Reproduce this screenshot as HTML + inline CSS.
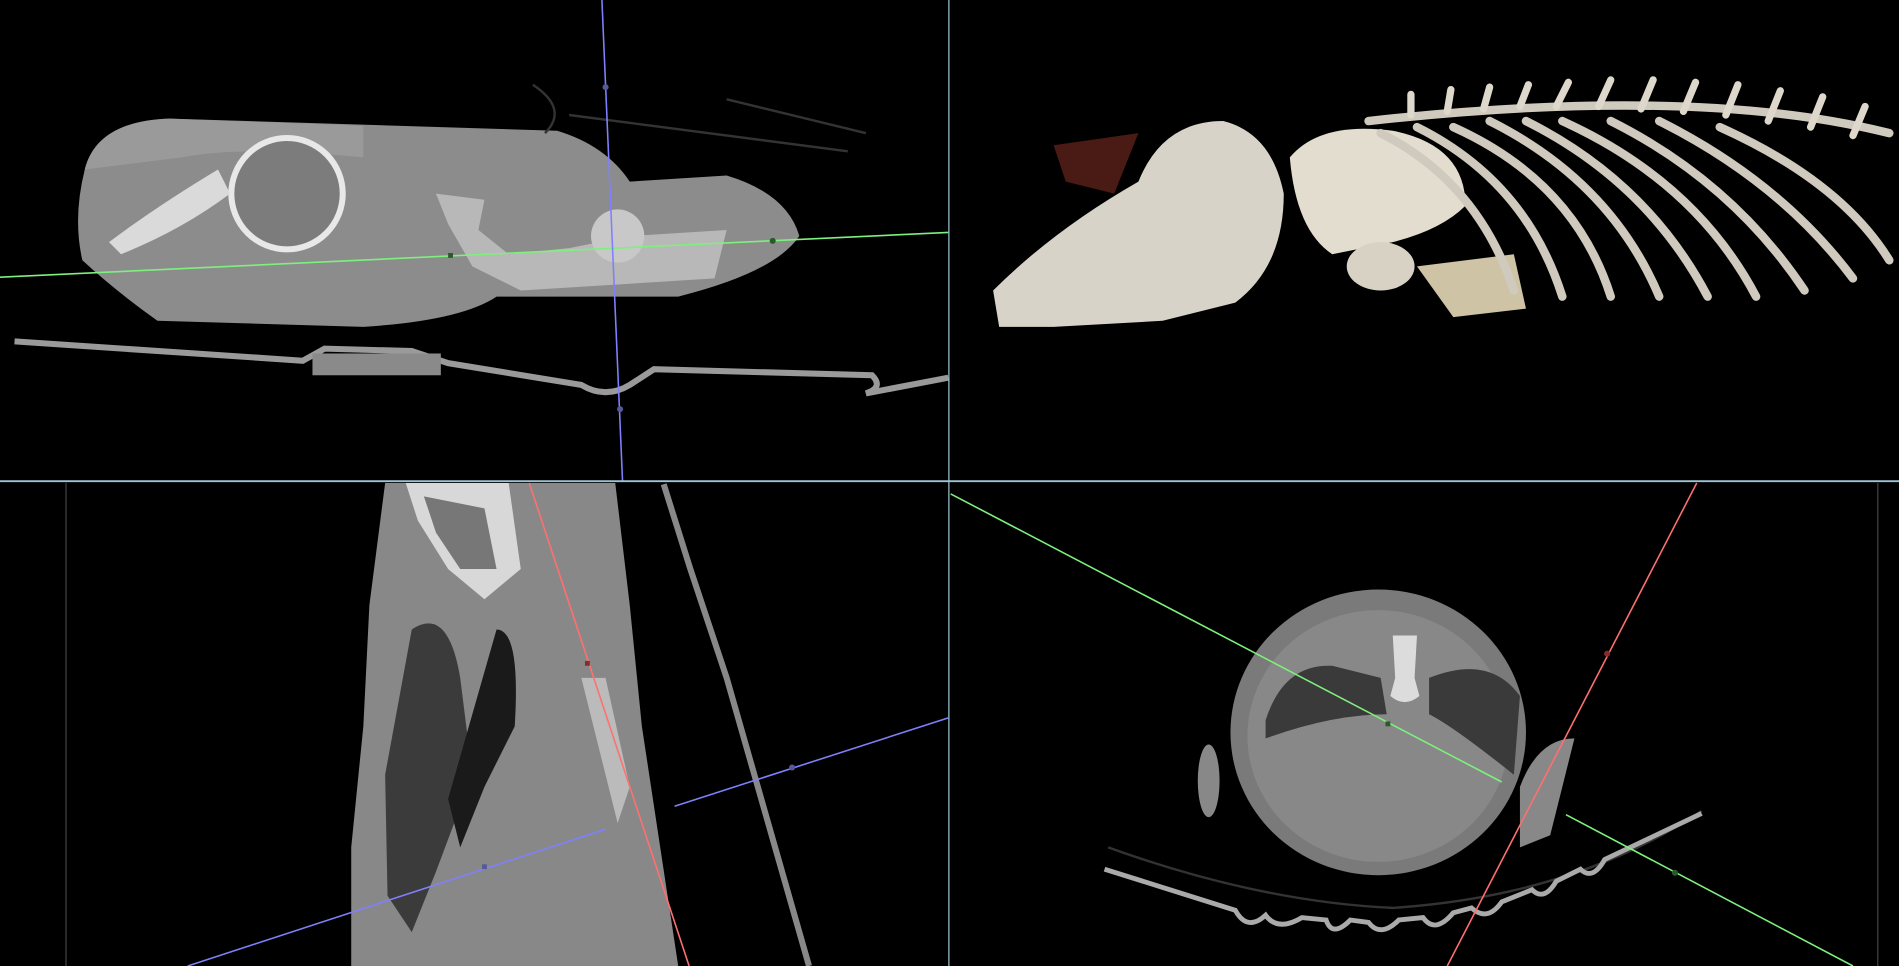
<!DOCTYPE html>
<html><head><meta charset="utf-8"><style>
html,body{margin:0;padding:0;background:#000;width:1899px;height:966px;overflow:hidden}
svg{display:block}
</style></head><body>
<svg width="1899" height="966" viewBox="0 0 1568 798" preserveAspectRatio="none">
<rect width="1568" height="798" fill="#000"/>
<path d="M70,140 Q80,100 140,98 L460,108 Q500,120 520,150 L600,145 Q650,160 660,195 Q640,225 560,245 L410,245 Q380,265 300,270 L130,265 Q95,240 68,215 Q60,180 70,140Z" fill="#8c8c8c"/>
<path d="M70,140 Q80,100 140,98 L300,104 L300,130 Q200,120 150,130 Z" fill="#9a9a9a"/>
<ellipse cx="237" cy="160" rx="46" ry="46" fill="#7c7c7c" stroke="#e8e8e8" stroke-width="5"/>
<path d="M90,200 Q130,170 180,140 L190,160 Q150,190 100,210Z" fill="#dadada"/>
<path d="M360,160 L400,165 L395,190 L420,210 L470,205 L520,195 L600,190 L590,230 L510,235 L430,240 L390,220 L370,185Z" fill="#b8b8b8"/>
<circle cx="510" cy="195" r="22" fill="#c8c8c8"/>
<path d="M12,282 L250,298 L268,288 L340,290 L370,300 L480,318 Q500,330 520,318 L540,305 L720,310 Q730,320 715,325 L783,312" stroke="#9a9a9a" stroke-width="5" fill="none"/>
<rect x="258" y="292" width="106" height="18" fill="#8a8a8a"/>
<path d="M440,70 Q470,90 450,110 M600,82 L715,110 M470,95 L700,125" stroke="#333" stroke-width="2" fill="none"/>
<line x1="0" y1="229" x2="783" y2="192" stroke="#7ef07e" stroke-width="1.3"/>
<line x1="497" y1="0" x2="514" y2="397" stroke="#8080ff" stroke-width="1.3"/>
<circle cx="500" cy="72" r="2.5" fill="#555a9a"/><circle cx="512" cy="338" r="2.5" fill="#555a9a"/>
<rect x="370" y="209" width="4" height="4" fill="#2a5a2a"/><circle cx="638" cy="199" r="2.5" fill="#2a5a2a"/>
<path d="M870,120 L940,110 L920,160 L880,150Z" fill="#4a1a14"/>
<path d="M820,240 Q870,190 940,150 Q960,100 1010,100 Q1050,110 1060,160 Q1060,220 1020,250 L960,265 L870,270 L825,270Z" fill="#d7d3c8"/>
<path d="M1065,130 Q1090,100 1150,108 Q1210,120 1210,170 Q1190,190 1150,200 L1100,210 Q1070,190 1065,130Z" fill="#e3ddcf"/>
<ellipse cx="1140" cy="220" rx="28" ry="20" fill="#d8d2c4"/>
<path d="M1170,220 L1250,210 L1260,255 L1200,262Z" fill="#cfc3a6"/>
<g stroke="#cfcabd" stroke-width="7" fill="none" stroke-linecap="round">
<path d="M1130,100 Q1400,70 1560,110"/>
<path d="M1140,110 Q1220,150 1250,240"/><path d="M1170,105 Q1260,150 1290,245"/><path d="M1200,105 Q1300,150 1330,245"/><path d="M1230,100 Q1330,150 1370,245"/><path d="M1260,100 Q1360,150 1410,245"/><path d="M1290,100 Q1400,150 1450,245"/><path d="M1330,100 Q1430,150 1490,240"/><path d="M1370,100 Q1470,150 1530,230"/><path d="M1420,105 Q1520,150 1560,215"/>
</g>
<g stroke="#ddd8cb" stroke-width="6" stroke-linecap="round">
<path d="M1165,95 L1165,78"/><path d="M1195,92 L1198,74"/><path d="M1225,90 L1230,72"/><path d="M1255,88 L1262,70"/><path d="M1285,88 L1295,68"/><path d="M1320,88 L1330,66"/><path d="M1355,90 L1365,66"/><path d="M1390,92 L1400,68"/><path d="M1425,95 L1435,70"/><path d="M1460,100 L1470,75"/><path d="M1495,105 L1505,80"/><path d="M1530,112 L1540,88"/>
</g>
<line x1="783.5" y1="0" x2="783.5" y2="798" stroke="#9cc6d6" stroke-width="1"/>
<line x1="0" y1="397.5" x2="1568" y2="397.5" stroke="#9cc6d6" stroke-width="1.5"/>
<line x1="54.5" y1="399" x2="54.5" y2="798" stroke="#444" stroke-width="1"/>
<line x1="1550.5" y1="399" x2="1550.5" y2="798" stroke="#444" stroke-width="1"/>
<path d="M318,399 L508,399 L520,500 L530,600 L560,798 L290,798 L290,700 L300,600 L305,500Z" fill="#888"/>
<path d="M335,399 L420,399 L430,470 L400,495 L370,470 L345,430Z" fill="#d8d8d8"/>
<path d="M350,410 L400,420 L410,470 L380,470 L360,440Z" fill="#777"/>
<path d="M340,520 Q370,500 380,560 L390,640 L360,720 L340,770 L320,740 L318,640 Z" fill="#3b3b3b"/>
<path d="M410,520 Q430,520 425,600 L400,650 L380,700 L370,660 Z" fill="#1a1a1a"/>
<path d="M480,560 L500,560 L520,650 L510,680Z" fill="#bbb"/>
<path d="M548,400 L570,470 L600,560 L640,700 L668,798" stroke="#888" stroke-width="5" fill="none"/>
<line x1="437" y1="399" x2="569" y2="798" stroke="#ff7070" stroke-width="1.3"/>
<line x1="155" y1="798" x2="500" y2="685" stroke="#8080ff" stroke-width="1.3"/>
<line x1="557" y1="666" x2="783" y2="593" stroke="#8080ff" stroke-width="1.3"/>
<circle cx="654" cy="634" r="2.5" fill="#555a9a"/><rect x="398" y="714" width="4" height="4" fill="#555a9a"/><rect x="483" y="546" width="4" height="4" fill="#8a2a2a"/>
<path d="M915,700 Q1040,745 1150,750 Q1300,740 1405,670" stroke="#333" stroke-width="2" fill="none"/>
<path d="M912,718 L1020,752 Q1030,770 1045,756 Q1055,770 1075,758 L1095,760 Q1100,775 1115,760 L1130,762 Q1140,775 1155,760 L1175,758 Q1185,772 1200,754 L1215,750 Q1228,762 1240,745 L1265,735 Q1275,745 1285,728 L1305,718 Q1315,728 1325,710 L1405,672" stroke="#aaa" stroke-width="4" fill="none"/>
<ellipse cx="1138" cy="605" rx="122" ry="118" fill="#7a7a7a"/>
<ellipse cx="1138" cy="608" rx="108" ry="104" fill="#888"/>
<path d="M1045,595 Q1060,548 1100,550 L1140,560 L1145,590 Q1100,590 1045,610Z" fill="#3a3a3a"/>
<path d="M1180,560 Q1230,540 1255,575 L1250,640 Q1200,600 1180,590Z" fill="#3a3a3a"/>
<path d="M1150,525 L1170,525 L1168,560 L1172,575 Q1160,585 1148,575 L1152,560Z" fill="#dcdcdc"/>
<ellipse cx="998" cy="645" rx="9" ry="30" fill="#888"/>
<path d="M1255,650 Q1270,610 1300,610 L1280,690 L1255,700Z" fill="#888"/>
<line x1="785" y1="408" x2="1240" y2="646" stroke="#7ef07e" stroke-width="1.3"/>
<line x1="1293" y1="673" x2="1530" y2="798" stroke="#7ef07e" stroke-width="1.3"/>
<line x1="1401" y1="399" x2="1195" y2="798" stroke="#ff7070" stroke-width="1.3"/>
<rect x="1144" y="596" width="4" height="4" fill="#2a5a2a"/><circle cx="1383" cy="721" r="2.5" fill="#2a5a2a"/><circle cx="1327" cy="540" r="2.5" fill="#8a2a2a"/>
</svg>
</body></html>
